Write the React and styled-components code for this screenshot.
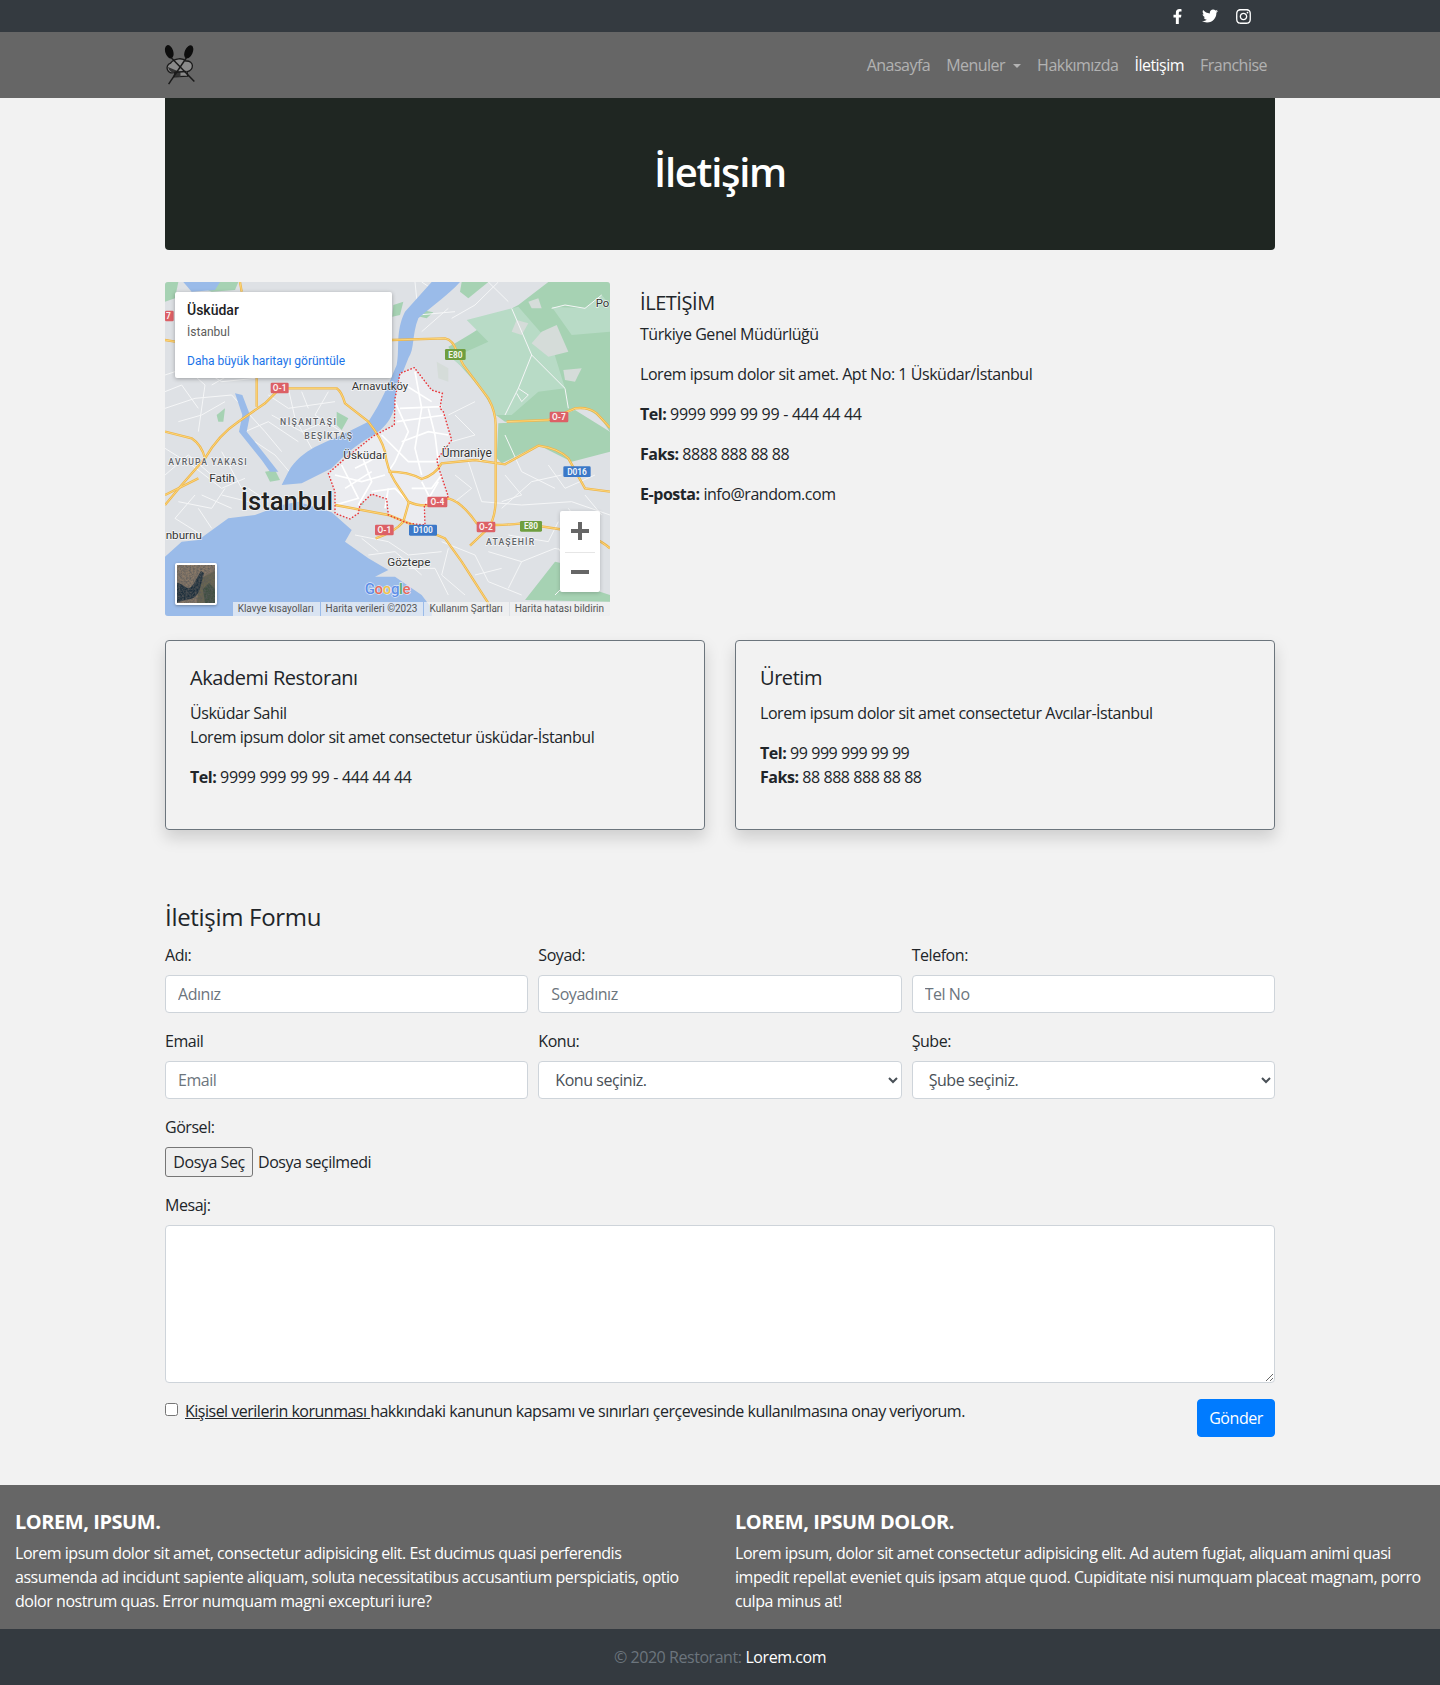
import React from 'react';
import styled, { createGlobalStyle } from 'styled-components';
import { FaFacebookF, FaTwitter, FaInstagram } from 'react-icons/fa';

const GlobalStyle = createGlobalStyle`
  * { box-sizing: border-box; }
  body {
    margin: 0;
    background: #f2f2f2;
    color: #212529;
    font-family: "Open Sans", "Liberation Sans", sans-serif;
    font-size: 16px;
    line-height: 24px;
    letter-spacing: -0.45px;
  }
  input, select, textarea, button { font-family: inherit; letter-spacing: inherit; }
`;

const TopBar = styled.div`
  height: 32px;
  background: #343a40;
`;

const TopInner = styled.div`
  width: 1140px;
  height: 100%;
  margin: 0 auto;
  padding-right: 38px;
  display: flex;
  justify-content: flex-end;
  align-items: center;
  gap: 17px;
  color: #fff;
  font-size: 16px;
  svg { display: block; }
`;

const NavBar = styled.nav`
  height: 66px;
  background: #666;
`;

const NavInner = styled.div`
  width: 1140px;
  height: 100%;
  margin: 0 auto;
  padding: 0 15px 0 13px;
  display: flex;
  justify-content: space-between;
  align-items: center;
`;

const NavLinks = styled.div`
  display: flex;
`;

const NavLink = styled.a`
  padding: 8px;
  letter-spacing: -0.52px;
  color: ${(p) => (p.$active ? '#fff' : 'rgba(255, 255, 255, 0.5)')};
`;

const Caret = styled.span`
  display: inline-block;
  margin-left: 8px;
  vertical-align: 3px;
  border-top: 4.8px solid currentColor;
  border-left: 4.8px solid transparent;
  border-right: 4.8px solid transparent;
`;

const Container = styled.main`
  width: 1140px;
  margin: 0 auto;
  padding: 0 15px;
`;

const Hero = styled.header`
  height: 152px;
  padding-bottom: 4px;
  background: #1f2622;
  border-radius: 0 0 4px 4px;
  display: flex;
  align-items: center;
  justify-content: center;
`;

const HeroTitle = styled.h1`
  margin: 0;
  color: #fff;
  font-size: 40px;
  line-height: 48px;
  font-weight: 600;
  letter-spacing: -1.3px;
`;

const InfoRow = styled.section`
  margin-top: 32px;
  display: flex;
  gap: 30px;
`;

const MapFrame = styled.div`
  position: relative;
  flex: 0 0 445px;
  height: 334px;
  overflow: hidden;
  border-radius: 3px;
  svg { display: block; }
`;

const MapPopup = styled.div`
  position: absolute;
  top: 10px;
  left: 10px;
  width: 217px;
  height: 86px;
  padding: 8px 12px;
  background: #fff;
  border-radius: 2px;
  box-shadow: 0 1px 4px rgba(0, 0, 0, 0.3);
  font-family: Roboto, sans-serif;
  letter-spacing: 0;
`;

const PopupTitle = styled.div`
  font-size: 14px;
  line-height: 20px;
  font-weight: 500;
  color: #202124;
`;

const PopupSub = styled.div`
  font-size: 12px;
  line-height: 20px;
  margin-top: 2px;
  color: #5b5b5b;
`;

const PopupLink = styled.a`
  display: block;
  margin-top: 10px;
  font-size: 12px;
  line-height: 19px;
  color: #1a73e8;
`;

const ZoomBox = styled.div`
  position: absolute;
  left: 395px;
  top: 229px;
  width: 40px;
  height: 81px;
  background: #fff;
  border-radius: 2px;
  box-shadow: 0 1px 4px rgba(0, 0, 0, 0.2);
  display: flex;
  flex-direction: column;
`;

const ZoomButton = styled.div`
  flex: 1;
  display: flex;
  align-items: center;
  justify-content: center;
  & + & { position: relative; }
  & + &::before {
    content: '';
    position: absolute;
    top: 0;
    left: 5px;
    right: 5px;
    height: 1px;
    background: #e6e6e6;
  }
`;

const SatThumb = styled.div`
  position: absolute;
  left: 10px;
  top: 281px;
  width: 42px;
  height: 42px;
  border: 2px solid #fff;
  border-radius: 2px;
  overflow: hidden;
  box-shadow: 0 1px 3px rgba(0, 0, 0, 0.3);
`;

const Attribution = styled.div`
  position: absolute;
  right: 0;
  bottom: 0;
  height: 14px;
  display: flex;
  gap: 1px;
  font-family: Roboto, sans-serif;
  font-size: 10px;
  line-height: 14px;
  letter-spacing: 0;
  color: #555;
`;

const AttributionItem = styled.span`
  padding: 0 6px 0 5px;
  background: rgba(245, 245, 245, 0.7);
`;

const InfoText = styled.div`
  flex: 1;
  padding-top: 9px;
`;

const InfoTitle = styled.h5`
  margin: 0 0 7px;
  font-size: 20px;
  line-height: 24px;
  font-weight: 500;
`;

const Para = styled.p`
  margin: 0 0 16px;
`;

const Phone = styled.span`
  letter-spacing: -0.28px;
`;

const Cards = styled.section`
  margin-top: 24px;
  display: grid;
  grid-template-columns: 540px 540px;
  gap: 30px;
`;

const Card = styled.article`
  height: 190px;
  padding: 24px;
  border: 1px solid #6c757d;
  border-radius: 4px;
  box-shadow: 0 8px 16px rgba(0, 0, 0, 0.15);
`;

const CardTitle = styled.h5`
  margin: 0 0 10px;
  font-size: 20px;
  line-height: 26px;
  font-weight: 500;
`;

const FormTitle = styled.h4`
  margin: 72px 0 12px;
  font-size: 24px;
  line-height: 29px;
  font-weight: 500;
  letter-spacing: -0.3px;
`;

const FormRow = styled.div`
  display: grid;
  grid-template-columns: repeat(3, 1fr);
  column-gap: 10px;
`;

const Field = styled.div`
  margin-bottom: 16px;
`;

const Label = styled.label`
  display: block;
  margin-bottom: 8px;
`;

const TextInput = styled.input`
  display: block;
  width: 100%;
  height: 38px;
  padding: 6px 12px;
  font-size: 16px;
  color: #495057;
  background: #fff;
  border: 1px solid #ced4da;
  border-radius: 4px;
  &::placeholder { color: #6c757d; opacity: 1; }
`;

const Select = styled.select`
  display: block;
  width: 100%;
  height: 38px;
  padding: 6px 12px;
  font-size: 16px;
  color: #495057;
  background: #fff;
  border: 1px solid #ced4da;
  border-radius: 4px;
`;

const FileRow = styled.div`
  display: flex;
  align-items: center;
  height: 30px;
  gap: 5px;
`;

const FileButton = styled.button`
  width: 88px;
  height: 30px;
  padding: 0;
  font-size: 16px;
  color: #212529;
  background: #efefef;
  border: 1px solid #767676;
  border-radius: 3px;
`;

const TextArea = styled.textarea`
  display: block;
  width: 100%;
  height: 158px;
  padding: 6px 12px;
  background: #fff;
  border: 1px solid #ced4da;
  border-radius: 4px;
`;

const ConsentRow = styled.div`
  display: flex;
  justify-content: space-between;
  align-items: flex-start;
  margin-bottom: 48px;
`;

const Consent = styled.label`
  display: flex;
  align-items: flex-start;
  letter-spacing: -0.5px;
  a { color: inherit; text-decoration: underline; }
`;

const Check = styled.input`
  width: 13px;
  height: 13px;
  margin: 4px 7px 0 0;
`;

const SendButton = styled.button`
  width: 78px;
  height: 38px;
  padding: 0;
  font-size: 16px;
  color: #fff;
  background: #007bff;
  border: 1px solid #007bff;
  border-radius: 4px;
`;

const FooterTop = styled.section`
  background: #666;
  color: #fff;
  padding: 25px 15px 16px;
  display: grid;
  grid-template-columns: 690px 690px;
  gap: 30px;
`;

const FooterTitle = styled.h5`
  margin: 0 0 7px;
  font-size: 20px;
  line-height: 24px;
  font-weight: 700;
`;

const FooterText = styled.p`
  margin: 0;
`;

const FooterBottom = styled.footer`
  height: 56px;
  background: #343a40;
  color: #6c757d;
  display: flex;
  align-items: center;
  justify-content: center;
  gap: 4px;
  a { color: #fff; }
`;

const Logo = () => (
  <svg width="33" height="40" viewBox="25 30 100 120">
    <g fill="#0d0d0d">
      <ellipse cx="44" cy="50" rx="12" ry="21" transform="rotate(-18 44 50)" />
      <ellipse cx="103" cy="50" rx="12" ry="21" transform="rotate(24 103 50)" />
    </g>
    <path d="M62 112 C38 122 28 92 48 84 C60 68 86 68 94 78 C120 76 120 106 98 110 L100 124 L58 126 Z" fill="#8a8a8a" stroke="#1a1a1a" strokeWidth="4" />
    <path d="M40 96 C44 110 54 114 62 112 L60 124 L78 126 L78 112 Z" fill="#333" />
    <g stroke="#1a1a1a" strokeWidth="4.5" fill="none">
      <path d="M50 68 L120 140" />
      <path d="M96 68 L42 148" />
      <path d="M60 112 L96 110" />
    </g>
  </svg>
);

const greenDark = [
  'M1180 21 L1365 21 V470 C1340 430 1310 395 1260 400 L1180 432 L1050 440 L1022 420 C990 350 950 310 905 260 L880 215 C950 180 1010 130 1090 90 Z',
  'M1030 445 L1180 436 L1260 405 L1365 470 V530 L1250 560 L1150 510 L1040 565 L1025 550 Z',
  'M1110 975 L1200 860 L1290 880 L1335 950 L1365 960 V980 Z',
  'M920 21 L1000 21 L940 70 L915 50 Z',
  'M100 21 L250 21 L240 45 L170 50 Z',
  'M30 21 L70 21 L60 70 L30 80 Z',
  'M715 90 L745 80 L735 120 L712 125 Z',
  'M800 105 L835 112 L815 130 L795 125 Z',
  'M185 420 L210 400 L205 440 L190 440 Z',
  'M545 410 L580 430 L560 465 L545 450 Z',
  'M330 590 L360 585 L375 615 L345 620 Z',
  'M585 650 L620 650 L625 690 L595 685 Z',
];

const greenLight = [
  'M935 135 L1090 95 L1190 210 L1230 340 L1150 350 L1070 420 L1022 420 C1000 370 975 330 950 300 L890 250 L1000 200 Z',
  'M1190 95 L1290 100 L1340 60 L1365 90 V170 L1250 180 Z',
];

const grayPatches = [
  'M1085 135 L1120 145 L1100 180 L1070 170 Z',
  'M1160 170 L1205 150 L1240 230 L1180 245 L1130 205 Z',
  'M1225 285 L1280 280 L1260 320 L1230 315 Z',
  'M1120 80 L1150 70 L1160 100 L1130 100 Z',
  'M845 260 L880 280 L880 320 L850 310 Z',
];

const majorRoads = [
  'M711 195 L870 190 Q895 195 905 230 L925 270 L1000 370 Q1022 410 1022 450 L1022 680 Q1020 730 1000 760 L945 812',
  'M375 340 L545 340 Q560 350 570 385 L640 440 Q680 490 690 530 Q695 580 720 620 L760 680 Q790 695 830 690 Q860 680 880 670 Q920 680 965 745 Q1010 755 1100 745 L1230 765 Q1320 780 1365 820',
  'M375 340 L330 385 L250 440 Q190 480 150 550 L80 630 L30 690',
  'M1055 440 L1180 435 L1260 400 Q1300 395 1325 415 L1365 458',
  'M30 470 L110 490 Q140 510 150 550',
  'M540 690 L700 720 L800 760 L870 790 L920 860 L1010 1000',
  'M700 590 Q760 590 800 612 Q840 600 860 565 L960 555 L1050 568 L1150 512 Q1210 520 1240 550 L1290 640 L1365 650',
  'M762 680 L745 740 Q720 770 662 790',
  'M30 195 L60 200',
  'M255 21 L260 50',
  'M305 310 L305 395',
  'M30 660 L130 610',
];

// white streets inside the district come first, they get a wider stroke
const districtStreets = [
  'M735 400 L860 395', 'M725 440 L870 420', 'M780 290 L800 400 L780 520 L800 600',
  'M680 480 L760 560 L850 560', 'M720 380 L760 470 L720 560 L700 590', 'M820 400 L840 480 L850 560',
  'M540 600 L620 620 L690 600', 'M560 570 L610 670 L540 690', 'M620 540 L650 620 L610 690', 'M650 650 L720 640 L760 680',
  'M800 620 L830 680', 'M860 600 L830 640 L770 640', 'M690 530 L640 560 L600 580',
  'M750 330 L830 380', 'M740 500 L820 470 L880 480', 'M570 640 L650 590', 'M700 640 L690 700', 'M850 620 L810 690',
];

const streets = [
  'M30 300 L120 270 L200 320 L300 310', 'M30 400 L120 370 L230 360', 'M60 250 L150 330 L130 470', 'M230 360 L330 470 L380 530',
  'M400 340 L420 430 L470 520', 'M520 350 L480 420 L560 470', 'M300 500 L360 540 L420 610', 'M30 520 L110 570 L200 640 L270 610',
  'M200 530 L260 640', 'M120 660 L60 730 L140 780', 'M230 700 L140 660', 'M340 360 L400 400 L540 380', 'M350 420 L440 470 L510 440',
  'M270 470 L340 440 L430 500', 'M70 440 L140 420 L210 380', 'M30 350 L80 330 L130 400', 'M170 330 L240 290', 'M30 600 L100 540 L170 600',
  'M70 680 L170 700 L210 640', 'M170 760 L130 700', 'M280 640 L340 680', 'M200 660 L280 680', 'M440 350 L460 400',
  'M880 100 L800 170', 'M780 21 L790 120 L900 110', 'M1050 480 L1100 590 L1200 640', 'M940 560 L980 680 L1100 690 L1250 680 L1365 720',
  'M1040 700 L1130 620 L1220 600', 'M1240 700 L1300 780', 'M1000 830 L1100 860 L1200 820 L1280 840', 'M860 800 L960 840 L1000 920 L1100 960',
  'M600 780 L700 800 L760 840 L860 830', 'M640 840 L720 830 L800 900', 'M1100 860 L1060 940', 'M900 420 L960 480 L890 500', 'M900 600 L950 640 L900 680',
  'M960 380 L880 420', 'M1050 600 L1100 660 L1040 680', 'M1180 570 L1230 640 L1320 600', 'M1290 660 L1340 720', 'M1060 780 L1180 800 L1210 740',
  'M1210 820 L1260 900 L1200 960', 'M880 820 L860 900 L930 960', 'M760 880 L840 880 L880 960', 'M960 900 L1040 880', 'M620 790 L670 830',
  'M800 21 L860 60 L900 21', 'M890 130 L960 90 L1030 21', 'M1000 21 L1060 80', 'M780 130 L760 190',
  'M1070 100 L1130 240 L1090 340 L1050 420', 'M1130 240 L1230 340 L1240 400', 'M1190 100 L1230 90 L1290 100 L1340 60', 'M1090 340 L1120 360 L1100 380 L1085 355',
];

const shields = [
  { x: 30, y: 107, w: 26, h: 32, fill: '#dc6066', label: '7', tx: 40 },
  { x: 347, y: 323, w: 54, h: 32, fill: '#dc6066', label: 'O-1' },
  { x: 870, y: 222, w: 62, h: 33, fill: '#6f9e3f', label: 'E80' },
  { x: 1184, y: 410, w: 56, h: 32, fill: '#dc6066', label: 'O-7' },
  { x: 1225, y: 574, w: 82, h: 32, fill: '#3b78c8', label: 'D016' },
  { x: 817, y: 665, w: 60, h: 32, fill: '#dc6066', label: 'O-4' },
  { x: 660, y: 749, w: 56, h: 32, fill: '#dc6066', label: 'O-1' },
  { x: 762, y: 749, w: 84, h: 33, fill: '#3b78c8', label: 'D100' },
  { x: 965, y: 740, w: 56, h: 32, fill: '#dc6066', label: 'O-2' },
  { x: 1095, y: 738, w: 66, h: 32, fill: '#6f9e3f', label: 'E80' },
];

const labels = [
  { x: 590, y: 345, s: 34, t: 'Arnavutköy' },
  { x: 565, y: 551, s: 35, t: 'Üsküdar' },
  { x: 860, y: 546, s: 36, t: 'Ümraniye' },
  { x: 163, y: 621, s: 35, t: 'Fatih' },
  { x: 697, y: 873, s: 35, t: 'Göztepe' },
  { x: 32, y: 792, s: 35, t: 'nburnu' },
  { x: 1322, y: 96, s: 34, t: 'Po' },
  { x: 375, y: 451, s: 26, t: 'NİŞANTAŞI', sp: 4.5, fill: '#5f6368' },
  { x: 448, y: 493, s: 26, t: 'BEŞİKTAŞ', sp: 3.5, fill: '#5f6368' },
  { x: 40, y: 570, s: 26, t: 'AVRUPA YAKASI', sp: 3.5, fill: '#5f6368' },
  { x: 993, y: 811, s: 26, t: 'ATAŞEHİR', sp: 3.5, fill: '#5f6368' },
];

const districtOutline = 'M778 278 L735 295 L720 370 L718 450 L655 483 L565 555 L520 595 L540 650 L540 715 L585 732 L610 715 L615 690 L650 657 L695 672 L700 720 L760 745 L810 750 L808 690 L880 665 L855 590 L845 555 L890 495 L865 410 L855 400 L862 355 L830 345 Z';

const IstanbulMap = () => (
  <svg width="445" height="334" viewBox="30 21 1335 1002" fontFamily="Roboto, sans-serif" letterSpacing="0">
    <rect x="30" y="21" width="1335" height="1002" fill="#dee1e5" />
    {greenDark.map((d) => <path key={d} d={d} fill="#a6d2b3" />)}
    {greenLight.map((d) => <path key={d} d={d} fill="#b8dbc6" />)}
    {grayPatches.map((d) => <path key={d} d={d} fill="#d5dcd9" />)}
    {streets.map((d) => <path key={d} d={d} fill="none" stroke="#f5f6f7" strokeWidth="3" />)}
    <path d="M830 21 L915 21 C880 60 840 85 790 130 C770 180 780 220 760 250 C745 290 730 320 730 340 C720 400 715 440 660 478 C600 510 570 540 530 580 L440 625 L380 630 L400 590 C440 520 520 500 560 480 L640 440 C680 380 700 330 725 270 C735 220 720 170 750 110 Z" fill="#9abbe9" />
    <path d="M30 845 L80 800 L130 795 L220 730 L300 720 L380 690 L430 680 L530 712 L590 765 L570 800 L640 850 L700 885 L660 905 L720 905 L800 960 L830 1000 L830 1023 L30 1023 Z" fill="#9abbe9" />
    <path d="M240 355 L262 420 L252 470 L320 555 L345 590 L370 590 L335 545 L275 470 L285 420 L262 360 Z" fill="#9abbe9" />
    <path d="M85 21 L110 50 L180 45 L195 21" fill="#9abbe9" />
    <path d={districtOutline} fill="#ebecf0" />
    {districtStreets.map((d) => <path key={d} d={d} fill="none" stroke="#fff" strokeWidth="5" />)}
    {majorRoads.map((d) => <path key={d} d={d} fill="none" stroke="#eeb54a" strokeWidth="7" />)}
    {majorRoads.map((d) => <path key={`${d}i`} d={d} fill="none" stroke="#fcd67a" strokeWidth="3" />)}
    <path d={districtOutline} fill="none" stroke="#e8383c" strokeWidth="4.5" strokeDasharray="1 9" strokeLinecap="round" />
    {shields.map((s) => (
      <g key={`${s.x}-${s.label}`}>
        <rect x={s.x} y={s.y} width={s.w} height={s.h} rx="4" fill={s.fill} />
        <text x={s.tx || s.x + s.w / 2} y={s.y + s.h / 2 + 9} textAnchor="middle" fontSize="25" fontWeight="700" fill="#fff" fillOpacity="0.92">{s.label}</text>
      </g>
    ))}
    {labels.map((l) => (
      <text
        key={l.t}
        x={l.x}
        y={l.y}
        fontSize={l.s}
        letterSpacing={l.sp || 0}
        fontWeight={l.sp ? 500 : 400}
        fill={l.fill || '#333'}
        stroke="#fff"
        strokeOpacity="0.75"
        strokeWidth="4"
        paintOrder="stroke"
      >
        {l.t}
      </text>
    ))}
    <text x="257" y="704" fontSize="77" fontWeight="500" fill="#222" stroke="#fff" strokeOpacity="0.7" strokeWidth="5" paintOrder="stroke">İstanbul</text>
    <text x="629" y="958" fontSize="45" fontWeight="500" letterSpacing="-1" stroke="#fff" strokeOpacity="0.7" strokeWidth="4" paintOrder="stroke">
      <tspan fill="#5f8fe8">G</tspan>
      <tspan fill="#e66a5e">o</tspan>
      <tspan fill="#f1c24d">o</tspan>
      <tspan fill="#5f8fe8">g</tspan>
      <tspan fill="#58ad6c">l</tspan>
      <tspan fill="#e66a5e">e</tspan>
    </text>
  </svg>
);

const Thumb = () => (
  <svg width="38" height="38" viewBox="0 0 38 38">
    <defs>
      <filter id="sat-noise">
        <feTurbulence type="fractalNoise" baseFrequency="0.55" numOctaves="2" seed="4" />
        <feColorMatrix values="0 0 0 0 0.1  0 0 0 0 0.1  0 0 0 0 0.1  0 0 0 1.6 -0.45" />
      </filter>
    </defs>
    <rect width="38" height="38" fill="#8b7a68" />
    <path d="M22 14 L38 6 V38 H20 Z" fill="#6a6650" />
    <path d="M26 24 L32 18 L38 24 V38 H28 Z" fill="#3e4f40" />
    <path d="M0 18 C6 18 10 26 14 22 C18 18 20 12 24 6 L27 8 C24 18 24 26 18 32 C12 36 6 34 0 38 Z" fill="#1d2f3c" />
    <rect width="38" height="38" filter="url(#sat-noise)" />
  </svg>
);

const App = () => (
  <>
    <GlobalStyle />
    <TopBar>
      <TopInner>
        <FaFacebookF size={15} />
        <FaTwitter size={16} />
        <FaInstagram size={17} />
      </TopInner>
    </TopBar>
    <NavBar>
      <NavInner>
        <Logo />
        <NavLinks>
          <NavLink>Anasayfa</NavLink>
          <NavLink>Menuler<Caret /></NavLink>
          <NavLink>Hakkımızda</NavLink>
          <NavLink $active>İletişim</NavLink>
          <NavLink>Franchise</NavLink>
        </NavLinks>
      </NavInner>
    </NavBar>
    <Container>
      <Hero>
        <HeroTitle>İletişim</HeroTitle>
      </Hero>
      <InfoRow>
        <MapFrame>
          <IstanbulMap />
          <MapPopup>
            <PopupTitle>Üsküdar</PopupTitle>
            <PopupSub>İstanbul</PopupSub>
            <PopupLink>Daha büyük haritayı görüntüle</PopupLink>
          </MapPopup>
          <ZoomBox>
            <ZoomButton>
              <svg width="18" height="18" viewBox="0 0 18 18"><path d="M7 0h4v7h7v4h-7v7H7v-7H0V7h7z" fill="#666" /></svg>
            </ZoomButton>
            <ZoomButton>
              <svg width="18" height="18" viewBox="0 0 18 18"><path d="M0 7h18v4H0z" fill="#666" /></svg>
            </ZoomButton>
          </ZoomBox>
          <SatThumb><Thumb /></SatThumb>
          <Attribution>
            <AttributionItem>Klavye kısayolları</AttributionItem>
            <AttributionItem>Harita verileri ©2023</AttributionItem>
            <AttributionItem>Kullanım Şartları</AttributionItem>
            <AttributionItem>Harita hatası bildirin</AttributionItem>
          </Attribution>
        </MapFrame>
        <InfoText>
          <InfoTitle>İLETİŞİM</InfoTitle>
          <Para>Türkiye Genel Müdürlüğü</Para>
          <Para>Lorem ipsum dolor sit amet. Apt No: 1 Üsküdar/İstanbul</Para>
          <Para><b>Tel:</b> <Phone>9999 999 99 99 - 444 44 44</Phone></Para>
          <Para><b>Faks:</b> 8888 888 88 88</Para>
          <Para><b>E-posta:</b> info@random.com</Para>
        </InfoText>
      </InfoRow>
      <Cards>
        <Card>
          <CardTitle>Akademi Restoranı</CardTitle>
          <Para>Üsküdar Sahil<br />Lorem ipsum dolor sit amet consectetur üsküdar-İstanbul</Para>
          <Para><b>Tel:</b> <Phone>9999 999 99 99 - 444 44 44</Phone></Para>
        </Card>
        <Card>
          <CardTitle>Üretim</CardTitle>
          <Para>Lorem ipsum dolor sit amet consectetur Avcılar-İstanbul</Para>
          <Para><b>Tel:</b> 99 999 999 99 99<br /><b>Faks:</b> 88 888 888 88 88</Para>
        </Card>
      </Cards>
      <form>
        <FormTitle>İletişim Formu</FormTitle>
        <FormRow>
          <Field><Label>Adı:</Label><TextInput placeholder="Adınız" /></Field>
          <Field><Label>Soyad:</Label><TextInput placeholder="Soyadınız" /></Field>
          <Field><Label>Telefon:</Label><TextInput placeholder="Tel No" /></Field>
          <Field><Label>Email</Label><TextInput placeholder="Email" /></Field>
          <Field><Label>Konu:</Label><Select><option>Konu seçiniz.</option></Select></Field>
          <Field><Label>Şube:</Label><Select><option>Şube seçiniz.</option></Select></Field>
        </FormRow>
        <Field>
          <Label>Görsel:</Label>
          <FileRow>
            <FileButton type="button">Dosya Seç</FileButton>
            <span>Dosya seçilmedi</span>
          </FileRow>
        </Field>
        <Field>
          <Label>Mesaj:</Label>
          <TextArea />
        </Field>
        <ConsentRow>
          <Consent>
            <Check type="checkbox" />
            <span><a>Kişisel verilerin korunması </a>hakkındaki kanunun kapsamı ve sınırları çerçevesinde kullanılmasına onay veriyorum.</span>
          </Consent>
          <SendButton type="button">Gönder</SendButton>
        </ConsentRow>
      </form>
    </Container>
    <FooterTop>
      <div>
        <FooterTitle>LOREM, IPSUM.</FooterTitle>
        <FooterText>Lorem ipsum dolor sit amet, consectetur adipisicing elit. Est ducimus quasi perferendis assumenda ad incidunt sapiente aliquam, soluta necessitatibus accusantium perspiciatis, optio dolor nostrum quas. Error numquam magni excepturi iure?</FooterText>
      </div>
      <div>
        <FooterTitle>LOREM, IPSUM DOLOR.</FooterTitle>
        <FooterText>Lorem ipsum, dolor sit amet consectetur adipisicing elit. Ad autem fugiat, aliquam animi quasi impedit repellat eveniet quis ipsam atque quod. Cupiditate nisi numquam placeat magnam, porro culpa minus at!</FooterText>
      </div>
    </FooterTop>
    <FooterBottom>
      © 2020 Restorant: <a>Lorem.com</a>
    </FooterBottom>
  </>
);

export default App;
